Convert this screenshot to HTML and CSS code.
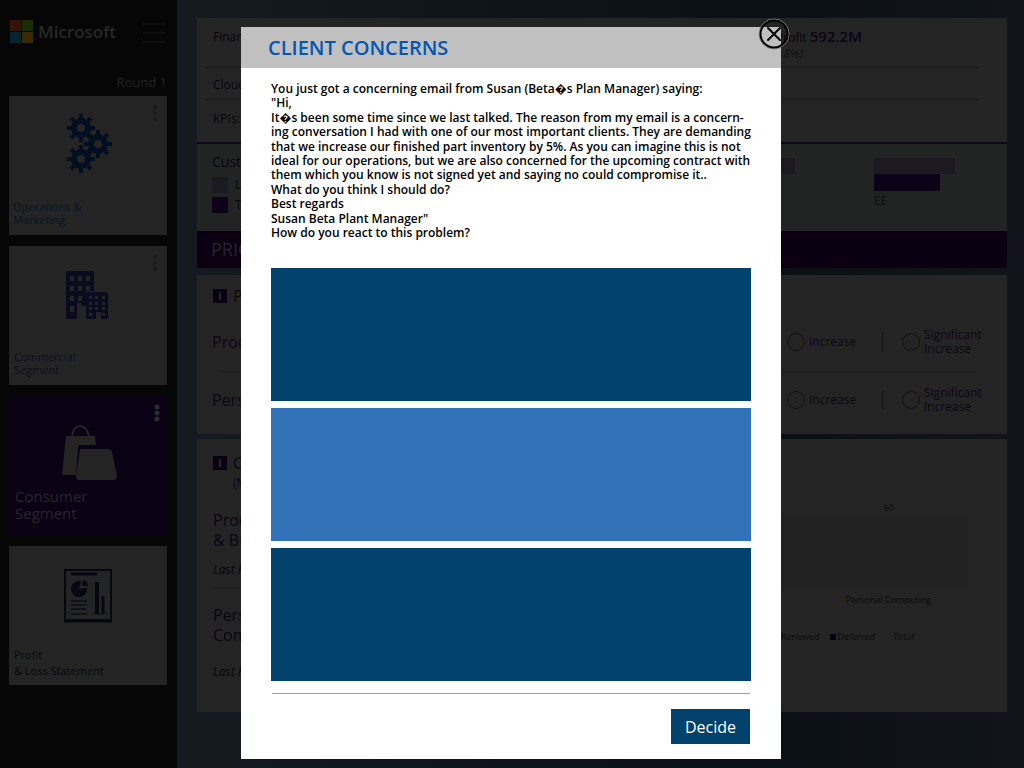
FILE: index.html
```
<!DOCTYPE html>
<html lang="en">
<head>
<meta charset="utf-8">
<meta name="viewport" content="width=device-width, initial-scale=1">
<title>Client Concerns</title>
<link rel="stylesheet" href="styles.css">
</head>
<body>
<div class="app">
  <aside class="sidebar">
    <div class="brand">
      <svg class="brand-mark" viewBox="0 0 23 23" aria-hidden="true"><path fill="#351309" d="M0 0h11v11H0z"/><path fill="#1b2d07" d="M12 0h11v11H12z"/><path fill="#08252f" d="M0 12h11v11H0z"/><path fill="#372a05" d="M12 12h11v11H12z"/></svg>
      <span class="brand-name">Microsoft</span>
      <button class="menu-button" type="button" aria-label="Menu"><svg viewBox="0 0 22 22" aria-hidden="true"><path d="M0 3h22M0 12h22M0 21h22" stroke="#0e0e0e" stroke-width="2"/></svg></button>
    </div>
    <p class="round">Round 1</p>
    <nav class="cards">
      <a class="card operations" href="#">
        <svg class="dots" viewBox="0 0 6 18" aria-hidden="true"><circle cx="3" cy="3" r="2"/><circle cx="3" cy="9" r="2"/><circle cx="3" cy="15" r="2"/></svg>
        <svg class="art" viewBox="0 0 60 60" aria-hidden="true">
          <defs><g id="gear"><circle r="7" fill="none" stroke="#030e20" stroke-width="6"/><path d="M0-9v-5M0 9v5M9 0h5M-9 0h-5M7-7l3-3M-7-7l-3-3M7 7l3 3M-7 7l-3 3" stroke="#030e20" stroke-width="4"/></g></defs>
          <use href="#gear" x="23" y="15"/><use href="#gear" x="40" y="31"/><use href="#gear" x="23" y="46"/>
        </svg>
        <span>Operations &amp;<br>Marketing</span>
      </a>
      <a class="card commercial" href="#">
        <svg class="dots" viewBox="0 0 6 18" aria-hidden="true"><circle cx="3" cy="3" r="2"/><circle cx="3" cy="9" r="2"/><circle cx="3" cy="15" r="2"/></svg>
        <svg class="art" viewBox="0 0 60 60" aria-hidden="true">
          <path fill="#0b0b20" fill-rule="evenodd" d="M10 8h24q2 0 2 2v18h-8v15h-5v-3h-4v15q0 1-1 1H9q-1 0-1-1V10q0-2 2-2zm2 5v5h4v-5zm8 0v5h4v-5zm8 0v5h4v-5zM12 23v5h4v-5zm8 0v5h4v-5zm8 0v4h4v-4zM12 33v5h4v-5zm8 0v5h4v-5zM12 43v6h4v-6z"/>
          <path fill="#0b0b20" fill-rule="evenodd" d="M30 29h18q2 0 2 2v24q0 1-1 1h-6v-7h-5v7h-9q-1 0-1-1V31q0-2 2-2zm1 4v3h3v-3zm6 0v3h3v-3zm7 0v3h3v-3zM31 39v3h3v-3zm6 0v3h3v-3zm7 0v3h3v-3zM31 44v3h3v-3zm6 0v3h3v-3zm7 0v3h3v-3zM31 50v3h3v-3zm13 0v3h3v-3z"/>
        </svg>
        <span>Commercial<br>Segment</span>
      </a>
      <a class="card consumer" href="#" aria-current="page">
        <svg class="dots" viewBox="0 0 6 18" aria-hidden="true"><circle cx="3" cy="3" r="2.5"/><circle cx="3" cy="9" r="2.5"/><circle cx="3" cy="15" r="2.5"/></svg>
        <svg class="art" viewBox="0 0 60 60" aria-hidden="true">
          <path d="M14 15q1-11 8-11t9 11" fill="none" stroke="#252525" stroke-width="2"/>
          <path fill="#242424" d="M8 14h29l1 9H22q-2 0-2 3l-2 27H4zM22 27h29q2 0 3 3l5 24q0 3-3 4H21q-3 0-3-3z"/>
        </svg>
        <span>Consumer<br>Segment</span>
      </a>
      <a class="card profit" href="#">
        <svg class="art" viewBox="0 0 60 60" aria-hidden="true">
          <path d="M7 7h46v50H7z" fill="none" stroke="#050811" stroke-width="2"/>
          <path d="M6 58h48M13 11h26" stroke="#050811" stroke-width="3"/>
          <circle cx="21" cy="26" r="8" fill="#050811"/><path d="M21 26l3-10 8 8z" fill="#242424"/><path d="M24 23l1-6q5 1 5 6z" fill="#050811"/>
          <path d="M13 38h16M13 42h16M13 46h16M13 51h16" stroke="#10131a" stroke-width="2"/>
          <path d="M35 51h15" stroke="#10131a"/><path d="M39 19v32" stroke="#050811" stroke-width="4"/><path d="M45 33v18" stroke="#050811" stroke-width="3"/>
        </svg>
        <span>Profit<br>&amp; Loss Statement</span>
      </a>
    </nav>
  </aside>

  <main class="main">
    <section class="summary">
      <div class="summary-row first"><span>Financials:</span><div class="figure">Profit <b>592.2M</b><br><i>(3.8%)</i></div></div>
      <div class="summary-row"><span>Cloud:</span></div>
      <div class="summary-row last"><span>KPIs:</span></div>
    </section>
    <section class="customers">
      <div class="legend">
        <h2>Customers</h2>
        <p><i class="swatch light"></i>Last</p>
        <p><i class="swatch dark"></i>This</p>
      </div>
      <div class="bars"><i class="bar light" style="width:75px"></i></div>
      <div class="bars"><i class="bar light" style="width:81px"></i><i class="bar dark" style="width:66px"></i><span>EE</span></div>
    </section>
    <h1 class="banner">PRIORITIES</h1>
    <section class="panel priorities">
      <h2 class="panel-title"><i class="info">i</i>Plan</h2>
      <div class="priority" role="radiogroup" aria-labelledby="priority-product">
        <span class="priority-name" id="priority-product">Product</span>
        <label class="option"><input type="radio" name="product">Increase</label>
        <label class="option significant"><input type="radio" name="product"><span>Significant<br>Increase</span></label>
      </div>
      <div class="priority" role="radiogroup" aria-labelledby="priority-personal">
        <span class="priority-name" id="priority-personal">Personal</span>
        <label class="option"><input type="radio" name="personal">Increase</label>
        <label class="option significant"><input type="radio" name="personal"><span>Significant<br>Increase</span></label>
      </div>
    </section>
    <section class="panel contracts">
      <div class="contract-list">
        <h2 class="panel-title"><i class="info">i</i>C</h2>
        <p class="note">(M)</p>
        <div class="contract"><h3>Prod<br>&amp; Bus</h3><p>Last R</p></div>
        <div class="contract second"><h3>Pers<br>Com</h3><p>Last R</p></div>
      </div>
      <figure class="chart">
        <div class="chart-value">$0</div>
        <div class="plot"></div>
        <div class="chart-label">Personal Computing</div>
        <figcaption class="chart-legend"><span><i></i>Renewed</span><span><i></i>Deferred</span><span class="total">Total</span></figcaption>
      </figure>
    </section>
  </main>
</div>

<div class="overlay">
  <div class="modal" role="dialog" aria-modal="true" aria-labelledby="modal-title">
    <header class="modal-header">
      <h2 id="modal-title">CLIENT CONCERNS</h2>
      <button class="close" type="button" aria-label="Close"><svg viewBox="0 0 32 32" aria-hidden="true"><circle cx="16" cy="16" r="15" fill="none" stroke="#888"/><circle cx="16" cy="16" r="13.5" fill="none" stroke="#000" stroke-width="2"/><path d="M10 10l12 12M22 10L10 22" stroke="#000" stroke-width="2" stroke-linecap="round"/></svg></button>
    </header>
    <div class="modal-body">
      <p class="message">You just got a concerning email from Susan (Beta&#xFFFD;s Plan Manager) saying:
"Hi,
It&#xFFFD;s been some time since we last talked. The reason from my email is a concern-
ing conversation I had with one of our most important clients. They are demanding
that we increase our finished part inventory by 5%. As you can imagine this is not
ideal for our operations, but we are also concerned for the upcoming contract with
them which you know is not signed yet and saying no could compromise it..
What do you think I should do?
Best regards
Susan Beta Plant Manager"
How do you react to this problem?</p>
      <div class="choices">
        <button class="choice" type="button" aria-label="First choice"></button>
        <button class="choice active" type="button" aria-label="Second choice"></button>
        <button class="choice" type="button" aria-label="Third choice"></button>
      </div>
      <footer class="modal-footer"><button class="decide" type="button">Decide</button></footer>
    </div>
  </div>
</div>
</body>
</html>
```
FILE: styles.css
```
* { box-sizing: border-box; }
body { margin: 0; background: #10141a; font-family: "Open Sans", "Noto Sans", sans-serif; font-size: 12px; color: #07040d; }
h1, h2, h3, p, figure { margin: 0; font-weight: 400; }
button { font-family: inherit; border: 0; padding: 0; cursor: pointer; }

.app { display: grid; grid-template-columns: 177px 1fr; min-height: 100vh; background: linear-gradient(90deg, #141a20 0, #141a20 197px, #0b0f16 75%, #11151b 100%); }

/* Sidebar */
.sidebar { background: #060606; padding: 20px 10px 0 9px; }
.brand { display: flex; align-items: center; height: 23px; padding: 0 2px 0 1px; }
.brand-mark { width: 23px; height: 23px; }
.brand-name { margin-left: 5px; font-size: 17px; font-weight: 600; color: #272727; }
.menu-button { margin-left: auto; background: none; width: 22px; height: 22px; }
.menu-button svg { display: block; }
.round { margin-top: 30px; height: 23px; line-height: 18px; font-size: 13px; text-align: right; color: #222; }
.cards { display: grid; gap: 11px; }
.card { position: relative; display: flex; flex-direction: column; align-items: flex-start; justify-content: space-between; min-height: 139px; padding: 17px 5px 9px; background: #242424; color: #0f0f1f; font-size: 11px; line-height: 13px; text-decoration: none; }
.art { width: 60px; height: 60px; align-self: center; }
.dots { position: absolute; top: 8px; right: 9px; width: 6px; height: 18px; fill: #1a1a1a; }
.operations { color: #081729; padding-left: 4px; }
.consumer { background: #0a0114; color: #27242d; font-size: 15px; line-height: 17px; padding: 26px 6px 13px; }
.consumer .dots { right: 7px; fill: #2c2c2c; }
.profit { color: #06080e; line-height: 16px; padding-bottom: 6px; }

/* Main column */
.main { padding: 18px 17px 0 20px; }
.summary { background: #242424; border-bottom: 2px solid #10051b; padding: 0 28px 0 8px; }
.summary-row { display: flex; justify-content: space-between; padding: 8px; height: 32px; line-height: 18px; border-bottom: 1px solid #1b1b1b; }
.summary-row.first { height: 50px; padding: 10px 117px 0 8px; }
.summary-row.last { height: 42px; border: 0; padding-top: 10px; }
.figure { text-align: right; line-height: 16px; }
.figure b { font-size: 15px; font-weight: 600; color: #0c0516; }
.figure i { padding-right: 59px; color: #111; }
.customers { display: grid; grid-template-columns: 1fr 154px 133px; height: 87px; padding: 14px 0 0 15px; background: #212423; }
.legend { line-height: 16px; }
.legend h2 { font-size: 14px; line-height: 8px; margin-bottom: 11px; }
.legend p { display: flex; gap: 7px; margin-bottom: 4px; color: #0a0610; }
.swatch { width: 16px; height: 16px; }
.light { background: #1d1922; }
.dark { background: #0e0219; }
.bars { line-height: 16px; color: #10100f; }
.bar { display: block; height: 16px; }
.bar.dark { height: 17px; }
.bars span { display: block; margin-top: 2px; }
.banner { height: 37px; padding-left: 14px; background: #0a0012; color: #292430; font-size: 18px; line-height: 37px; margin-bottom: 7px; }
.panel { background: #242424; margin-bottom: 5px; }
.panel-title { display: flex; align-items: center; gap: 6px; padding-left: 16px; font-size: 16px; line-height: 22px; color: #0b0910; }
.info { width: 14px; height: 14px; background: #090112; color: #303030; font-size: 11px; line-height: 14px; font-style: normal; font-weight: 700; text-align: center; }
.priorities { height: 159px; padding-top: 10px; }
.priority { display: grid; grid-template-columns: 1fr 95px 125px; align-items: center; height: 58px; margin-left: 15px; color: #0e0616; }
.panel-title + .priority { margin-top: 6px; }
.priority + .priority { background: linear-gradient(#202020, #202020) 8px 0 / calc(100% - 37px) 1px no-repeat; }
.priority-name { font-size: 16px; }
.option { display: flex; align-items: center; gap: 4px; line-height: 14px; }
.option input { appearance: none; width: 18px; height: 18px; flex: none; margin: 0; border: 1px solid #121212; border-radius: 50%; }
.significant { min-height: 20px; padding-left: 20px; background: linear-gradient(#161616, #161616) 0 50% / 1px 20px no-repeat; }
.contracts { display: grid; grid-template-columns: 1fr 227px; height: 273px; padding-top: 13px; }
.note { padding-left: 36px; line-height: 18px; }
.contract { padding-left: 16px; margin-top: 18px; }
.contract h3 { font-size: 16px; line-height: 20px; color: #0b0513; }
.contract p { margin-top: 11px; font-style: italic; line-height: 18px; }
.contract.second { border-top: 1px solid #202020; margin: 8px 0 0 16px; padding: 17px 0 0; }
.contract.second p { margin-top: 18px; }
.chart { padding: 48px 39px 0 0; font-size: 9px; line-height: 16px; text-align: center; color: #0b0b0b; }
.chart-value, .chart-label { padding-left: 29px; }
.plot { height: 70px; margin: 1px 0 5px; background: #212121; }
.chart-legend { display: flex; justify-content: flex-end; gap: 10px; margin-top: 21px; padding-right: 54px; }
.chart-legend span { display: flex; align-items: center; gap: 2px; }
.chart-legend i { width: 6px; height: 6px; background: #02050b; }
.chart-legend .total { padding-left: 8px; }

/* Dialog */
.overlay { position: fixed; inset: 0; display: flex; justify-content: center; align-items: flex-start; padding: 27px 2px 0 0; overflow: auto; }
.modal { position: relative; width: 540px; max-width: 100%; background: #fff; color: #000; }
.modal-header { padding: 8px 27px 7px; background: #c0c0c0; }
.modal-header h2 { font-size: 20px; line-height: 26px; font-weight: 600; color: #0057b5; }
.close { position: absolute; top: -9px; right: -9px; width: 32px; height: 32px; border-radius: 50%; background: none; }
.close svg { display: block; }
.modal-body { padding: 14px 30px 15px; }
.message { font-size: 12px; line-height: 1.2; font-weight: 600; white-space: pre-line; }
.choices { display: grid; gap: 7px; margin-top: 28px; }
.choice { height: 133px; background: #00426b; }
.choice.active { background: #3171b5; }
.modal-footer { display: flex; justify-content: flex-end; margin: 12px 1px 0; padding-top: 15px; border-top: 1px solid #999; }
.decide { padding: 1px 14px 0; height: 35px; background: #00426b; color: #fff; font-size: 16px; line-height: 34px; }
```
